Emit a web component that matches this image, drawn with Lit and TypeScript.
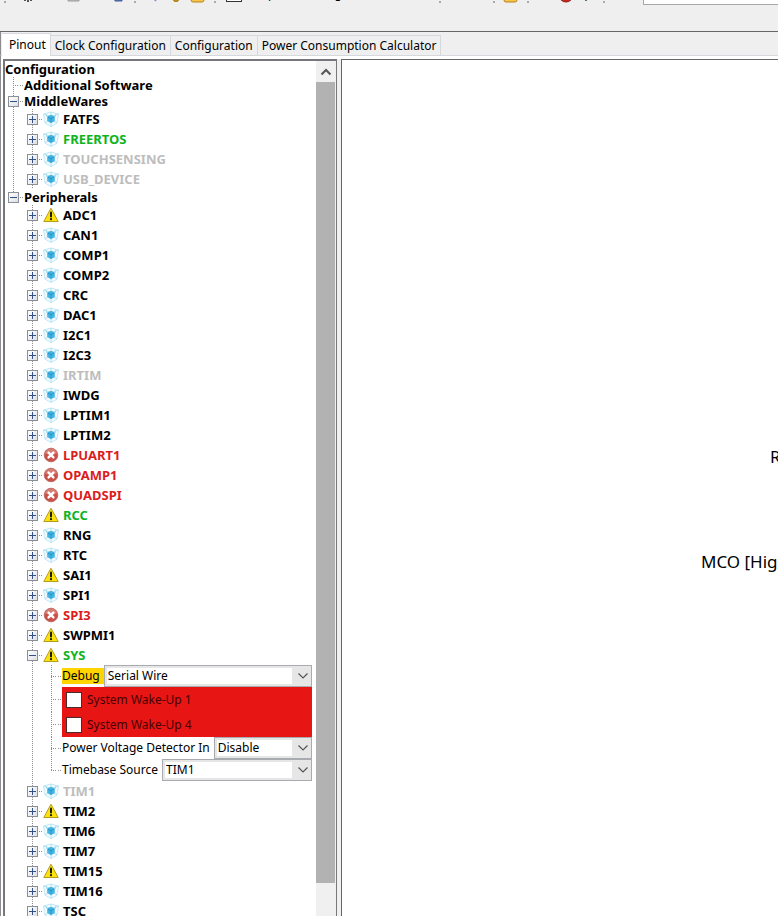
import { LitElement, html, svg, css, nothing, TemplateResult } from "lit";
import { customElement, state } from "lit/decorators.js";

type Status = "cube" | "warn" | "error";
type Tone = "plain" | "on" | "off" | "bad";
interface Item { name: string; icon: Status; tone: Tone }

const item = (name: string, icon: Status = "cube", tone: Tone = "plain"): Item => ({ name, icon, tone });

const MIDDLEWARES: Item[] = [
  item("FATFS"),
  item("FREERTOS", "cube", "on"),
  item("TOUCHSENSING", "cube", "off"),
  item("USB_DEVICE", "cube", "off"),
];

const PERIPHERALS: Item[] = [
  item("ADC1", "warn"),
  item("CAN1"), item("COMP1"), item("COMP2"), item("CRC"), item("DAC1"), item("I2C1"), item("I2C3"),
  item("IRTIM", "cube", "off"),
  item("IWDG"), item("LPTIM1"), item("LPTIM2"),
  item("LPUART1", "error", "bad"), item("OPAMP1", "error", "bad"), item("QUADSPI", "error", "bad"),
  item("RCC", "warn", "on"),
  item("RNG"), item("RTC"),
  item("SAI1", "warn"),
  item("SPI1"),
  item("SPI3", "error", "bad"),
  item("SWPMI1", "warn"),
  item("SYS", "warn", "on"),
  item("TIM1", "cube", "off"),
  item("TIM2", "warn"),
  item("TIM6"), item("TIM7"),
  item("TIM15", "warn"),
  item("TIM16"), item("TSC"),
];

const TABS = ["Pinout", "Clock Configuration", "Configuration", "Power Consumption Calculator"];

const ICONS: Record<Status, TemplateResult> = {
  cube: svg`
    <path d="M0.500 3 L8 1 L15.500 3 L14 12 L8 15.500 L2 12 Z" fill="#f3fbfe" stroke="#b5e2f3" stroke-width="0.800"/>
    <path d="M0.500 3 L8 5.500 L15.500 3 M8 1 V4 M2 12 L5.500 9.500 M14 12 L10.500 9.500 M8 12 V15.500 M3.500 3 V6 M12.500 3 V6" fill="none" stroke="#a3daf0" stroke-width="0.800"/>
    <path d="M8 3.800 L11.800 5.500 V10 L8 12.200 L4.200 10 V5.500 Z" fill="#45b4e2"/>
    <path d="M5 6.200 L8 7.500 L11 6.200 M8 7.500 V11" fill="none" stroke="#1f93c6" stroke-width="0.900"/>`,
  warn: svg`
    <path d="M8 1.200 L15.200 14.500 H0.800 Z" fill="#fbe20c" stroke="#b59c1c" stroke-width="1" stroke-linejoin="round"/>
    <path d="M8 5.500 V9.500" stroke="#1c1a00" stroke-width="2" stroke-linecap="round"/>
    <circle cx="8" cy="12.200" r="1.100" fill="#1c1a00"/>`,
  error: svg`
    <circle cx="8" cy="8" r="6.800" fill="#cb5048" stroke="#b5625c" stroke-width="0.800"/>
    <path d="M2 6.500 A6.200 6.200 0 0 1 14 6.500 Q8 9 2 6.500" fill="#e39a92" opacity="0.600"/>
    <path d="M5.600 5.600 L10.400 10.400 M10.400 5.600 L5.600 10.400" stroke="#fff" stroke-width="2.400" stroke-linecap="round"/>`,
};

interface Tool { label: string; gap: number; width: number; art: TemplateResult }
const tool = (label: string, gap: number, width: number, art: TemplateResult): Tool => ({ label, gap, width, art });

const folder = svg`<path d="M1 4 H6 L8 6 H14 V15 Q14 17 12 17 H3 Q1 17 1 15 Z" fill="#f6c64a" stroke="#b9831d"/>`;
const FILE_TOOLS: Tool[] = [
  tool("New project", 14, 16, svg`<path d="M8 2 V17 M5 8 V16 M11 8 V16" stroke="#222" stroke-width="1.500"/>`),
  tool("Open project", 29, 16, svg`<path d="M3 4 H14 V16 H3 Z" fill="#bcbcbc" stroke="#9a9a9a"/>`),
  tool("Save project", 31, 14, svg`<path d="M2 4 H10 V16 H3 Z" fill="#5572b4" stroke="#3f5b9c"/>`),
];
const EDIT_TOOLS: Tool[] = [
  tool("Undo", 11, 16, svg`<path d="M4 9 Q8 4 11 10 L8 16" fill="none" stroke="#8a94c4" stroke-width="2"/>`),
  tool("Settings", 5, 16, svg`<circle cx="8" cy="11" r="5" fill="#e8b830" stroke="#a87a14"/><path d="M8 14 V17" stroke="#b98a1c" stroke-width="4"/>`),
  tool("Open library", 6, 16, folder),
];

@customElement("app-root")
export class AppRoot extends LitElement {
  @state() private tab = 0;
  @state() private open = new Set(["MiddleWares", "Peripherals", "SYS"]);

  static styles = css`
    :host {
      --dots: #8e8e8e;
      display: flex; flex-direction: column; height: 100vh; overflow: hidden;
      background: #efefef; color: #000;
      font: 12px/16px "Noto Sans", "DejaVu Sans", sans-serif;
    }
    * { box-sizing: border-box; }
    button, select, input { font: inherit; color: inherit; margin: 0; }
    svg { display: block; }
    ul { list-style: none; margin: 0; padding: 0; }

    .toolbar { flex: none; height: 31px; overflow: hidden; }
    .tools { display: flex; align-items: flex-end; height: 24px; margin-top: -19px; padding-left: 4px; }
    .tool { border: 0; padding: 0; background: none; flex: none; }
    .grip { flex: none; width: 2px; height: 20px; background: repeating-linear-gradient(#aaa 0 2px, transparent 2px 4px); }
    .keep { flex: none; display: flex; gap: 5px; align-items: center; margin: 0 12px 3px 10px; white-space: nowrap; }
    .keep input { appearance: none; width: 16px; height: 16px; border: 1px solid #333; background: #fff; }
    .mid { margin-left: 52px; }
    .near { margin-left: 8px; }
    .search { flex: 1; min-width: 0; height: 22px; margin-left: 38px; border: 1px solid #a8a8a8; border-right: 0; background: #fff; padding: 0 4px; }

    .book { flex: 1; min-height: 0; display: flex; flex-direction: column; border-top: 1px solid #65656a; }
    .tabs { flex: none; display: flex; align-items: flex-end; height: 24px; padding-left: 1px; border-left: 1px solid #8c8c90; border-bottom: 1px solid #d5d9dd; }
    .tab { height: 20px; padding: 0 4px; border: 1px solid #d5d9dd; border-width: 1px 1px 0 0; background: #efefef; white-space: nowrap; line-height: 20px; }
    .tab.current { height: 23px; background: #fff; margin-bottom: -1px; padding: 0 4px 0 7px; }
    .panes { flex: 1; min-height: 0; display: flex; gap: 4px; background: #fff; border-left: 1px solid #8c8c90; padding: 3px 0 0 2px; }

    .tree-pane { flex: none; width: 334px; display: flex; border: solid #77777c; border-width: 2px 1px 0 2px; box-shadow: 4px 0 #f0f0f0; }
    .tree { flex: 1; min-width: 0; overflow: hidden; font-weight: bold; font-size: 13px; }
    .nest { padding-left: 19px; }
    .through > .nest { background: linear-gradient(var(--dots) 50%, transparent 50%) 8px 0 / 1px 2px repeat-y; }
    .row { display: flex; align-items: center; height: 20px; padding-left: 3px; white-space: nowrap; }
    .row.root { height: 16px; padding-left: 0; }
    .row.branch { height: 16px; }
    .rail {
      flex: none; width: 11px; align-self: stretch; display: flex; align-items: center;
      background: linear-gradient(var(--dots) 50%, transparent 50%) 5px 0 / 1px 2px repeat-y;
    }
    .rail.leaf {
      background:
        linear-gradient(90deg, #fff 5px, transparent 5px),
        linear-gradient(90deg, var(--dots) 50%, transparent 50%) 5px 50% / 2px 1px repeat-x,
        linear-gradient(var(--dots) 50%, transparent 50%) 5px 0 / 1px 2px repeat-y;
    }
    .rail.end {
      background:
        linear-gradient(90deg, #fff 5px, transparent 5px),
        linear-gradient(90deg, var(--dots) 50%, transparent 50%) 5px 50% / 2px 1px repeat-x,
        linear-gradient(transparent 50%, #fff 50%),
        linear-gradient(var(--dots) 50%, transparent 50%) 5px 0 / 1px 2px repeat-y;
    }
    .link { flex: none; width: 5px; height: 1px; background: linear-gradient(90deg, transparent 50%, var(--dots) 50%) 0 0 / 2px 1px; }
    .expander { display: block; width: 11px; height: 11px; padding: 0; border: 1px solid #8a8f98; background: linear-gradient(135deg, #fff, #dcdfe4); }
    .icon { flex: none; margin-right: 4px; }
    .on { color: #0db421; }
    .off { color: #bdbdbd; }
    .bad { color: #dc1c1c; }

    .setting { display: flex; align-items: center; height: 22px; padding: 0 4px 0 3px; font-weight: normal; font-size: 12px; white-space: nowrap; }
    .setting.check { height: 25px; }
    .caption { flex: none; padding-right: 4px; }
    .caption.marked { background: #ffd500; }
    .combo { position: relative; flex: 1; min-width: 0; align-self: stretch; }
    .combo select {
      appearance: none; display: block; width: 100%; height: 100%; padding: 0 22px 0 3px; border: 1px solid #a8abb0; border-radius: 0;
      background: linear-gradient(#fff, #fff) 2px 2px / calc(100% - 21px) calc(100% - 4px) no-repeat #e6e6e6;
    }
    .combo svg { position: absolute; right: 3px; top: 7px; pointer-events: none; }
    .alert { flex: 1; align-self: stretch; display: flex; align-items: center; gap: 5px; padding-left: 4px; background: #e81515; color: #450404; }
    .alert input { appearance: none; width: 16px; height: 16px; border: 1px solid #4a2a2a; background: #fff; }
    .alert input:checked { background: radial-gradient(#222 4px, #fff 5px); }

    .scroll { flex: none; width: 20px; display: flex; flex-direction: column; background: #f0f0f0; padding-right: 1px; }
    .scroll button { flex: none; height: 21px; padding: 0; border: 0; background: none; display: flex; align-items: center; justify-content: center; }
    .thumb { flex: 801; background: #b2b2b2; }
    .track { flex: 33; }

    .canvas { position: relative; z-index: 1; flex: 1; min-width: 0; overflow: hidden; background: #fff; border: solid #65656a; border-width: 1px 0 0 1px; }
    .pin { position: absolute; font-size: 17px; line-height: 24px; white-space: nowrap; }
    .pin.reset { left: 428px; top: 385px; }
    .pin.mco { left: 359px; top: 490px; }
  `;

  private toggle(name: string) {
    const next = new Set(this.open);
    if (!next.delete(name)) next.add(name);
    this.open = next;
  }

  private expander(name: string) {
    const open = this.open.has(name);
    return html`<button class="expander" aria-label="Toggle ${name}" aria-expanded=${open} @click=${() => this.toggle(name)}>
      <svg width="9" height="9" viewBox="0 0 9 9" aria-hidden="true" shape-rendering="crispEdges">
        <path d=${open ? "M1 4.500 H8" : "M1 4.500 H8 M4.500 1 V8"} stroke="#34508c"/>
      </svg></button>`;
  }

  private row(it: Item) {
    return html`<li class="through">
      <div class="row">
        <span class="rail">${this.expander(it.name)}</span><span class="link"></span>
        <svg class="icon" width="16" height="16" viewBox="0 0 16 16" aria-hidden="true">${ICONS[it.icon]}</svg>
        <span class=${it.tone}>${it.name}</span>
      </div>
      ${it.name === "SYS" && this.open.has("SYS") ? this.sysSettings() : nothing}
    </li>`;
  }

  private combo(id: string, caption: string, options: string[], marked = false, end = false) {
    return html`<li class="setting">
      <span class="rail ${end ? "end" : "leaf"}"></span><span class="link"></span>
      <label class="caption ${marked ? "marked" : ""}" for=${id}>${caption}</label>
      <span class="combo">
        <select id=${id}>${options.map((o) => html`<option>${o}</option>`)}</select>
        <svg width="12" height="8" viewBox="0 0 12 8" aria-hidden="true"><path d="M1.500 1.500 L6 6 L10.500 1.500" fill="none" stroke="#555" stroke-width="1.200"/></svg>
      </span>
    </li>`;
  }

  private check(caption: string) {
    return html`<li class="setting check">
      <span class="rail leaf"></span><span class="link"></span>
      <label class="alert"><input type="checkbox">${caption}</label>
    </li>`;
  }

  private sysSettings() {
    return html`<ul class="nest">
      ${this.combo("debug", "Debug", ["Serial Wire", "Disable", "JTAG (5 pins)"], true)}
      ${this.check("System Wake-Up 1")}
      ${this.check("System Wake-Up 4")}
      ${this.combo("pvd", "Power Voltage Detector In", ["Disable", "Internal"])}
      ${this.combo("timebase", "Timebase Source", ["TIM1", "SysTick"], false, true)}
    </ul>`;
  }

  private branch(name: string, items: Item[], last = false) {
    return html`<li class=${last ? "" : "through"}>
      <div class="row branch"><span class="rail ${last ? "end" : ""}">${this.expander(name)}</span><span class="link"></span>${name}</div>
      ${this.open.has(name) ? html`<ul class="nest">${items.map((i) => this.row(i))}</ul>` : nothing}
    </li>`;
  }

  private toolButton(t: Tool) {
    return html`<button class="tool" aria-label=${t.label} style="margin-left:${t.gap}px">
      <svg width=${t.width} height="20" viewBox="0 0 ${t.width} 20" aria-hidden="true">${t.art}</svg></button>`;
  }

  render() {
    return html`
      <header class="toolbar">
        <div class="tools">
          <span class="grip"></span>
          ${FILE_TOOLS.map((t) => this.toolButton(t))}
          <span class="grip near"></span>
          ${EDIT_TOOLS.map((t) => this.toolButton(t))}
          <span class="grip near"></span>
          <label class="keep"><input type="checkbox">Keep Current Signals Placement</label>
          <span class="grip"></span>
          <span class="grip mid"></span>
          ${this.toolButton(tool("Find", 8, 16, folder))}
          <span class="grip near"></span>
          ${this.toolButton(tool("Stop", 29, 16, svg`<circle cx="8" cy="10" r="7" fill="#c8271d" stroke="#8d1812"/>`))}
          ${this.toolButton(tool("Run", 5, 16, svg`<path d="M6 8 V16 H8 V8 Z" fill="#4d7a55"/>`))}
          <span class="grip near"></span>
          <input class="search" type="text" aria-label="Search">
        </div>
      </header>
      <main class="book">
        <nav class="tabs" role="tablist">
          ${TABS.map((t, i) => html`<button role="tab" aria-selected=${i === this.tab} class="tab ${i === this.tab ? "current" : ""}" @click=${() => (this.tab = i)}>${t}</button>`)}
        </nav>
        <div class="panes">
          <section class="tree-pane">
            <div class="tree">
              <div class="row root">Configuration</div>
              <ul>
                <li class="row branch"><span class="rail leaf"></span><span class="link"></span>Additional Software</li>
                ${this.branch("MiddleWares", MIDDLEWARES)}
                ${this.branch("Peripherals", PERIPHERALS, true)}
              </ul>
            </div>
            <div class="scroll">
              <button aria-label="Scroll up"><svg width="12" height="8" viewBox="0 0 12 8" aria-hidden="true"><path d="M1.500 6.500 L6 2 L10.500 6.500" fill="none" stroke="#555" stroke-width="2"/></svg></button>
              <div class="thumb"></div>
              <div class="track"></div>
            </div>
          </section>
          <section class="canvas">
            <span class="pin reset">RCC_OSC_IN</span>
            <span class="pin mco">MCO [High speed clock]</span>
          </section>
        </div>
      </main>`;
  }
}
